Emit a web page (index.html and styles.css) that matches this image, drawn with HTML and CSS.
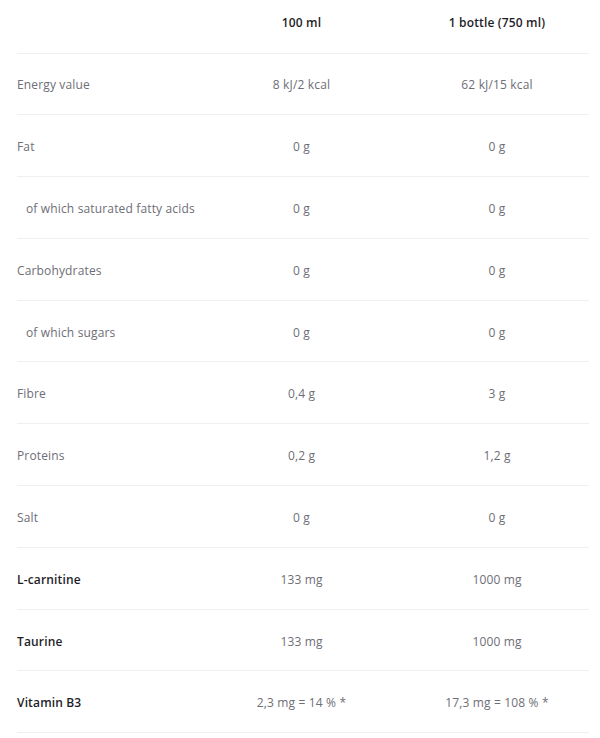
FILE: index.html
```html
<!DOCTYPE html>
<html>
<head>
<meta charset="utf-8">
<link rel="stylesheet" href="styles.css">
</head>
<body>
<div class="table">
  <div class="row head">
    <div class="c1"></div>
    <div class="c2">100 ml</div>
    <div class="c3">1 bottle (750 ml)</div>
  </div>
  <div class="row"><div class="c1">Energy value</div><div class="c2">8 kJ/2 kcal</div><div class="c3">62 kJ/15 kcal</div></div>
  <div class="row"><div class="c1">Fat</div><div class="c2">0 g</div><div class="c3">0 g</div></div>
  <div class="row"><div class="c1 sub">of which saturated fatty acids</div><div class="c2">0 g</div><div class="c3">0 g</div></div>
  <div class="row"><div class="c1">Carbohydrates</div><div class="c2">0 g</div><div class="c3">0 g</div></div>
  <div class="row"><div class="c1 sub">of which sugars</div><div class="c2">0 g</div><div class="c3">0 g</div></div>
  <div class="row"><div class="c1">Fibre</div><div class="c2">0,4 g</div><div class="c3">3 g</div></div>
  <div class="row"><div class="c1">Proteins</div><div class="c2">0,2 g</div><div class="c3">1,2 g</div></div>
  <div class="row"><div class="c1">Salt</div><div class="c2">0 g</div><div class="c3">0 g</div></div>
  <div class="row"><div class="c1 bold">L-carnitine</div><div class="c2">133 mg</div><div class="c3">1000 mg</div></div>
  <div class="row"><div class="c1 bold">Taurine</div><div class="c2">133 mg</div><div class="c3">1000 mg</div></div>
  <div class="row"><div class="c1 bold">Vitamin B3</div><div class="c2">2,3 mg = 14 % *</div><div class="c3">17,3 mg = 108 % *</div></div>
</div>
</body>
</html>
```
FILE: styles.css
```css
html, body {
  margin: 0;
  padding: 0;
  background: #ffffff;
}
body {
  font-family: "Open Sans", "Liberation Sans", sans-serif;
  font-size: 12px;
  letter-spacing: 0.15px;
  color: #6e6e76;
}
.table {
  margin-left: 17px;
  width: 572px;
  display: flex;
  flex-direction: column;
}
.row {
  display: grid;
  grid-template-columns: 187px 195px 190px;
  align-items: center;
  height: 61.8px;
  box-sizing: border-box;
  padding-top: 2px;
  border-bottom: 1.5px solid #efeff1;
}
.row.head {
  height: 53.5px;
  padding-top: 0;
  padding-bottom: 7px;
  color: #1e1e28;
  font-weight: 600;
}
.c2 {
  text-align: center;
}
.c3 {
  text-align: center;
  padding-left: 6px;
}
.sub {
  padding-left: 9px;
}
.bold {
  color: #1e1e28;
  font-weight: 600;
}
```
